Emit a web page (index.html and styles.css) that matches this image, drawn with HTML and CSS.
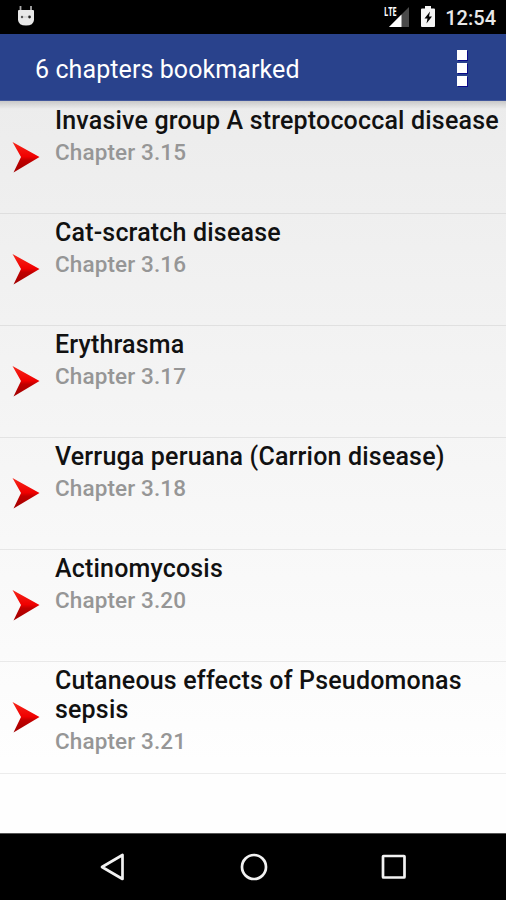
FILE: index.html
```
<!DOCTYPE html>
<html lang="en">
<head>
    <meta charset="UTF-8">
    <meta name="viewport" content="width=device-width, initial-scale=1.0">
    <title>Bookmarks</title>
    <link rel="stylesheet" href="styles.css">
</head>
<body>
    <!-- Shared list marker -->
    <svg class="defs" width="0" height="0">
        <defs>
            <linearGradient id="red" x1="0" y1="0" x2="0" y2="1">
                <stop offset="0" stop-color="#f5281c"/>
                <stop offset="0.48" stop-color="#f00000"/>
                <stop offset="0.6" stop-color="#c00000"/>
                <stop offset="1" stop-color="#a00000"/>
            </linearGradient>
            <symbol id="marker" viewBox="0 0 28 32">
                <path d="M0.5 1 L27.5 16 L1.5 31.500 L9 16 Z" fill="url(#red)"/>
            </symbol>
        </defs>
    </svg>

    <div class="phone">
        <div class="status-bar">
            <svg class="robot" width="18" height="21" viewBox="0 0 18 21">
                <path d="M3.500 0 V5 M14 0 V5" stroke="#aaa" stroke-width="1.8"/>
                <path d="M1 5 Q1 4 2 4 H16 Q17 4 17 5 V14 Q16.500 19.500 9 19.500 Q1.500 19.500 1 14 Z" fill="#e8e8e8"/>
                <circle cx="5" cy="11" r="1.2" fill="#555"/>
                <circle cx="12.5" cy="11" r="1.4" fill="#222"/>
                <path d="M6 11 H11.500" stroke="#bbb" stroke-width="0.7"/>
            </svg>
            <div class="status-right">
                <div class="signal">
                    <span class="lte">LTE</span>
                    <svg width="20" height="20" viewBox="0 0 20 20">
                        <path d="M0 20 L20 0 V20 Z" fill="#4a4a4a"/>
                        <path d="M0 20 L12.500 7.500 V20 Z" fill="#fff"/>
                    </svg>
                </div>
                <svg class="battery" width="14" height="21" viewBox="0 0 14 21">
                    <path d="M1 2.500 H4 V0 H10 V2.500 H13 Q14 2.500 14 3.500 V20 Q14 21 13 21 H1 Q0 21 0 20 V3.500 Q0 2.500 1 2.500 Z" fill="#f5f5f5"/>
                    <path d="M9 5.500 L3.500 12.500 H6.500 L5.500 17.500 L11 10.500 H8 Z" fill="#000"/>
                </svg>
                <span class="clock">12:54</span>
            </div>
        </div>

        <div class="app-bar">
            <h1>6 chapters bookmarked</h1>
            <div class="menu">
                <span></span>
                <span></span>
                <span></span>
            </div>
        </div>

        <div class="content">
            <ul class="chapters">
                <li class="chapter">
                    <svg class="marker"><use href="#marker"/></svg>
                    <div class="chapter-text">
                        <h2>Invasive group A streptococcal disease</h2>
                        <p>Chapter 3.15</p>
                    </div>
                </li>
                <li class="chapter">
                    <svg class="marker"><use href="#marker"/></svg>
                    <div class="chapter-text">
                        <h2>Cat-scratch disease</h2>
                        <p>Chapter 3.16</p>
                    </div>
                </li>
                <li class="chapter">
                    <svg class="marker"><use href="#marker"/></svg>
                    <div class="chapter-text">
                        <h2>Erythrasma</h2>
                        <p>Chapter 3.17</p>
                    </div>
                </li>
                <li class="chapter">
                    <svg class="marker"><use href="#marker"/></svg>
                    <div class="chapter-text">
                        <h2>Verruga peruana (Carrion disease)</h2>
                        <p>Chapter 3.18</p>
                    </div>
                </li>
                <li class="chapter">
                    <svg class="marker"><use href="#marker"/></svg>
                    <div class="chapter-text">
                        <h2>Actinomycosis</h2>
                        <p>Chapter 3.20</p>
                    </div>
                </li>
                <li class="chapter">
                    <svg class="marker"><use href="#marker"/></svg>
                    <div class="chapter-text">
                        <h2>Cutaneous effects of Pseudomonas sepsis</h2>
                        <p>Chapter 3.21</p>
                    </div>
                </li>
            </ul>
        </div>

        <div class="nav-bar">
            <svg width="28" height="28" viewBox="0 0 28 28">
                <path d="M23.500 2 V26 L3 14 Z"/>
            </svg>
            <svg width="28" height="28" viewBox="0 0 28 28">
                <circle cx="14" cy="14" r="12"/>
            </svg>
            <svg width="28" height="28" viewBox="0 0 28 28">
                <rect x="3" y="3" width="21.500" height="21.500" rx="0.500"/>
            </svg>
        </div>
    </div>
</body>
</html>
```
FILE: styles.css
```
* {
    box-sizing: border-box;
}

body {
    margin: 0;
    font-family: Roboto, "Liberation Sans", sans-serif;
    background-color: #fff;
}

h1, h2, p, ul {
    margin: 0;
    padding: 0;
}

.defs {
    display: block;
}

.phone {
    width: 506px;
    height: 900px;
    display: flex;
    flex-direction: column;
    overflow: hidden;
}

.status-bar {
    height: 34px;
    background-color: #000;
    display: flex;
    justify-content: space-between;
    padding: 6px 10px 0 17px;
}

.status-right {
    display: flex;
}

.signal {
    width: 20px;
    margin-right: 12px;
    position: relative;
    padding-top: 1px;
}

/* network label sits over the corner of the signal triangle */
.lte {
    position: absolute;
    left: -5px;
    top: 0;
    color: #fff;
    font-family: "Open Sans", sans-serif;
    font-size: 12px;
    font-weight: 700;
    line-height: 12px;
    transform: scaleX(0.62);
    transform-origin: left;
}

.battery {
    margin-right: 10px;
}

.clock {
    color: #e8e8e8;
    font-size: 20px;
    font-weight: 500;
    line-height: 24px;
}

.app-bar {
    height: 67px;
    background-color: #29428c;
    border-bottom: 1px solid #42579b;
    display: flex;
    justify-content: space-between;
    align-items: center;
    padding: 2px 39px 0 35px;
}

.app-bar h1 {
    color: #fff;
    font-size: 25px;
    font-weight: 400;
    line-height: 30px;
    letter-spacing: 0.09px;
    padding-top: 3px;
}

.menu {
    display: flex;
    flex-direction: column;
    gap: 3px;
}

.menu span {
    width: 10px;
    height: 10px;
    background-color: #fff;
    box-shadow: 1px 1px 0 #0a0a8a;
}

.content {
    flex: 1;
    background:
        linear-gradient(rgba(0, 0, 0, 0.15), rgba(0, 0, 0, 0) 8px),
        linear-gradient(#ececec, #fefefe 660px);
}

.chapters {
    list-style: none;
}

.chapter {
    height: 112px;
    box-shadow: 0 1px 0 rgba(0, 0, 0, 0.07);
    display: flex;
}

.marker {
    width: 28px;
    height: 32px;
    align-self: center;
    margin-left: 12px;
    margin-right: 15px;
    flex-shrink: 0;
}

.chapter-text {
    padding-top: 5px;
    flex: 1;
}

.chapter h2 {
    color: #111;
    font-size: 25px;
    font-weight: 500;
    line-height: 29px;
    letter-spacing: 0.18px;
}

.chapter p {
    color: #969696;
    font-size: 22.5px;
    font-weight: 500;
    line-height: 26px;
    letter-spacing: 0.12px;
    margin-top: 4px;
}

.nav-bar {
    height: 67px;
    background-color: #000;
    border-top: 1px solid #555;
    display: flex;
    justify-content: center;
    align-items: center;
    gap: 112.5px;
    padding-left: 1px;
}

.nav-bar svg {
    fill: none;
    stroke: #f2f2f2;
    stroke-width: 2.7;
    stroke-linejoin: round;
}
```
